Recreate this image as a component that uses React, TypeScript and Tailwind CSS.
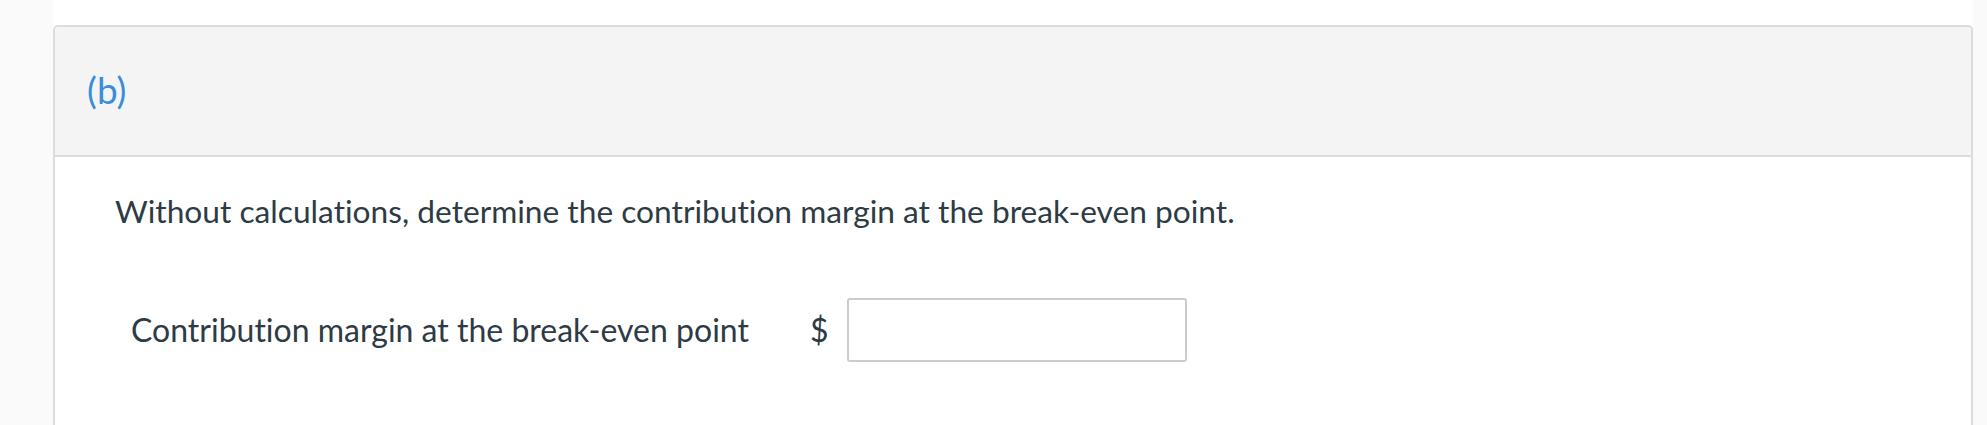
import React from 'react';

const font = { fontFamily: 'Lato, "Noto Sans", sans-serif' };

export default function App() {
  return (
    <div
      className="flex h-[425px] w-full overflow-hidden bg-white text-[#2d3b45] [font-variant-ligatures:none]"
      style={font}
    >
      <div className="w-[53px] shrink-0 bg-[#fafafa]" />
      <div className="flex-1 pt-[25px]">
        <div className="h-full rounded-t-[5px] border-2 border-b-0 border-[#dcdcdc]">
          <div className="h-[130px] rounded-t-[4px] border-b-2 border-[#dcdcdc] bg-[#f4f4f4] pl-[32px] pt-[41px]">
            <span className="text-[37px] leading-[1.2] text-[#3a8ddb]">(b)</span>
          </div>
          <div className="pl-[60px] pt-[30px]">
            <p className="text-[31.7px] leading-[48px]">
              Without calculations, determine the contribution margin at the break-even point.
            </p>
            <div className="mt-[63px] flex items-center pl-[16px]">
              <span className="text-[32px] leading-none">Contribution margin at the break-even point</span>
              <span className="ml-[61px] text-[32px] leading-none">$</span>
              <input
                type="text"
                className="ml-[19px] h-[64px] w-[340px] rounded-[3px] border-2 border-[#cccccc] bg-white outline-none"
              />
            </div>
          </div>
        </div>
      </div>
      <div className="w-[14px] shrink-0 bg-[#fafafa]" />
    </div>
  );
}
